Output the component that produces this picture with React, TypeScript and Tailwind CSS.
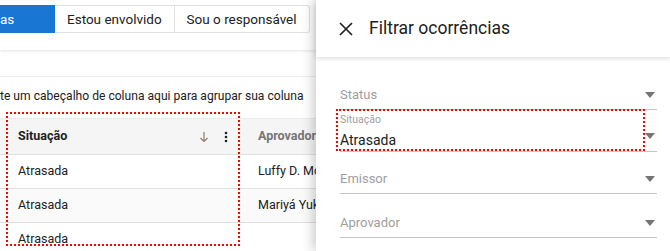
import React from "react"

const Caret = () => (
  <svg width="10" height="6" viewBox="0 0 10 6" className="shrink-0">
    <path d="M0 0 L10 0 L5 6 Z" fill="#757575" />
  </svg>
)

const FilterField = ({ label, value }: { label: string; value?: string }) => {
  if (value) {
    return (
      <div className="flex border-b border-[#c4c4c4] h-[42px]">
        <div className="flex-1 flex flex-col pt-[4px]">
          <span className="text-[10.5px] text-[#9e9e9e] leading-[12px]">{label}</span>
          <span className="text-[14px] text-[#212121] leading-[20px] mt-[4px]">{value}</span>
        </div>
        <div className="pt-[23px] pr-[2px]">
          <Caret />
        </div>
      </div>
    )
  }
  return (
    <div className="flex items-end border-b border-[#c4c4c4] h-[31px] pb-[6px]">
      <span className="flex-1 text-[13px] leading-[16px] text-[#9e9e9e]">{label}</span>
      <div className="pr-[2px] pb-[5px]">
        <Caret />
      </div>
    </div>
  )
}

const rows = [
  { situacao: "Atrasada", aprovador: "Luffy D. Monkey", bg: "bg-white" },
  { situacao: "Atrasada", aprovador: "Mariyá Yukihira", bg: "bg-[#fafafa]" },
  { situacao: "Atrasada", aprovador: "", bg: "bg-white" },
]

const App = () => {
  return (
    <div
      className="relative w-[670px] h-[251px] overflow-hidden bg-white"
      style={{ fontFamily: "Roboto, 'Liberation Sans', sans-serif" }}
    >
      {/* page behind the panel */}
      <div className="flex flex-col">
        <div className="h-[50px] shadow-[0_1px_3px_rgba(0,0,0,0.12)] pt-[5px] flex">
          <div className="flex h-[28px] text-[13.5px]">
            <div className="w-[55px] bg-[#1976d2] text-white flex items-center">as</div>
            <div className="px-[12px] border border-l-0 border-[#e0e0e0] text-[#212121] flex items-center">
              Estou envolvido
            </div>
            <div className="px-[12px] border border-l-0 border-[#e0e0e0] rounded-r-[3px] text-[#212121] flex items-center">
              Sou o responsável
            </div>
          </div>
        </div>
        <div className="mt-[26px] border-t border-[#ececec] h-[42px] pb-[2px] flex items-center text-[12.1px] text-[#212121] whitespace-nowrap">
          te um cabeçalho de coluna aqui para agrupar sua coluna
        </div>
        <div className="flex h-[37px] bg-[#f5f5f5] border-b border-[#e0e0e0] border-t border-t-[#ececec] items-center text-[12.5px] font-bold">
          <div className="w-[245px] flex items-center pl-[18px] pr-[17px]">
            <span className="flex-1 text-[#212121]">Situação</span>
            <svg width="10" height="12" viewBox="0 0 10 12" className="mr-[15px]">
              <path d="M5 1 V10.5 M1.5 7 L5 10.5 L8.5 7" stroke="#8d7a6a" strokeWidth="1.2" fill="none" />
            </svg>
            <svg width="4" height="12" viewBox="0 0 4 12">
              <circle cx="2" cy="2" r="1.3" fill="#212121" />
              <circle cx="2" cy="6" r="1.3" fill="#212121" />
              <circle cx="2" cy="10" r="1.3" fill="#212121" />
            </svg>
          </div>
          <div className="pl-[13px] text-[#757575]">Aprovador</div>
        </div>
        {rows.map((r, i) => (
          <div key={i} className={`flex h-[34px] items-center border-b border-[#e0e0e0] text-[12.5px] text-[#212121] ${r.bg}`}>
            <div className="w-[245px] pl-[18px]">{r.situacao}</div>
            <div className="pl-[13px] whitespace-nowrap">{r.aprovador}</div>
          </div>
        ))}
      </div>

      {/* annotation on the grid column */}
      <div className="absolute left-[6px] top-[112px] w-[234px] h-[134px] border-2 border-dotted border-[#ff0000]" />

      {/* filter panel */}
      <div className="absolute top-0 right-0 w-[354px] h-full bg-white shadow-[-4px_0_10px_rgba(0,0,0,0.18)] flex flex-col">
        <div className="h-[57px] flex items-center pl-[23px] shadow-[0_2px_4px_rgba(0,0,0,0.12)]">
          <svg width="14" height="14" viewBox="0 0 14 14" className="mr-[16px]">
            <path d="M1 1 L13 13 M13 1 L1 13" stroke="#212121" strokeWidth="1.7" />
          </svg>
          <span className="text-[17.5px] text-[#212121]">Filtrar ocorrências</span>
        </div>
        <div className="flex flex-col pl-[24px] pr-[13px] pt-[22px]">
          <FilterField label="Status" />
          <FilterField label="Situação" value="Atrasada" />
          <div className="h-[11px]" />
          <FilterField label="Emissor" />
          <div className="h-[13px]" />
          <FilterField label="Aprovador" />
        </div>
        {/* annotation on the Situação field */}
        <div className="absolute left-[20px] top-[109px] w-[309px] h-[42px] border-2 border-dotted border-[#ff0000]" />
      </div>
    </div>
  )
}

export default App
